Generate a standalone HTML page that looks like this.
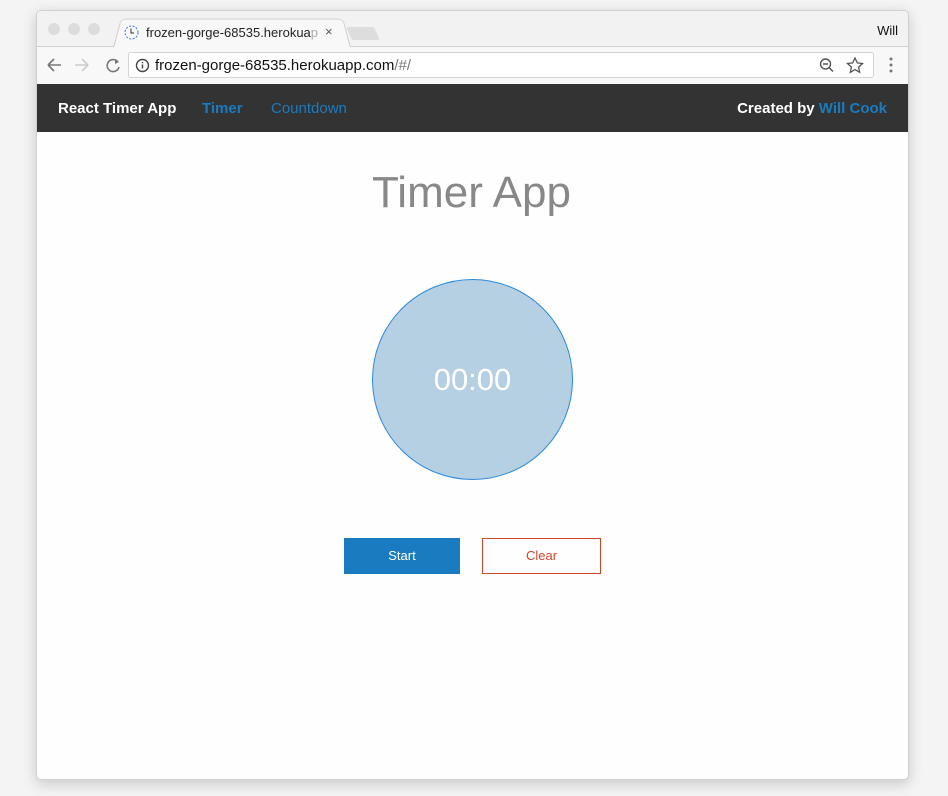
<!DOCTYPE html>
<html><head><style>
*{margin:0;padding:0;box-sizing:border-box}
body{width:948px;height:796px;background:#f4f4f4;font-family:"Liberation Sans",sans-serif;position:relative;overflow:hidden}
.win{position:absolute;left:36px;top:10px;width:873px;height:770px;background:#fefefe;border:1px solid #cfcfcf;border-radius:5px;overflow:hidden;box-shadow:0 4px 14px rgba(0,0,0,.18)}
.tabs{position:absolute;left:0;top:0;width:100%;height:36px;background:#f2f2f2;border-bottom:1px solid #d0d0d0}
.dot{position:absolute;top:12px;width:12px;height:12px;border-radius:50%;background:#dcdcdc}
.tab{position:absolute;left:80px;top:7px;width:230px;height:30px;background:#f8f8f8;border:1px solid #cfcfcf;border-bottom:none;border-radius:5px 5px 0 0;transform:perspective(60px) rotateX(8deg)}
.tabt{position:absolute;left:109px;top:14px;font-size:13px;color:#222}
.tool{position:absolute;left:0;top:36px;width:100%;height:37px;background:#f8f8f8}
.url{position:absolute;left:91px;top:5px;width:746px;height:26px;background:#fff;border:1px solid #d4d4d4;border-radius:3px}
.nav{position:absolute;left:-1px;top:73px;width:873px;height:48px;background:#333}
.nav span{position:absolute;top:16px;font-size:15px}
.circle{position:absolute;left:335px;top:268px;width:201px;height:201px;border-radius:50%;background:#b5cfe3;border:1px solid #2b8ad8;color:#fff;font-size:31px;text-align:center;line-height:199px}
</style></head><body>
<div class="win">
 <div class="tabs">
  <div class="dot" style="left:11px"></div><div class="dot" style="left:31px"></div><div class="dot" style="left:51px"></div>
  <div class="tab"></div>
  <svg style="position:absolute;left:87px;top:14px" width="15" height="15"><circle cx="7.5" cy="7.5" r="6.5" fill="none" stroke="#3a78c8" stroke-dasharray="2 1.5"/><path d="M7 3.5V8h3" stroke="#333" fill="none"/></svg>
  <div class="tabt">frozen-gorge-68535.herokua<span style="color:#aaa">p</span></div>
  <div style="position:absolute;left:288px;top:13px;font-size:13px;color:#555">×</div>
  <div style="position:absolute;left:312px;top:16px;width:28px;height:13px;background:#ddd;transform:skewX(25deg);border-radius:2px"></div>
  <div style="position:absolute;right:10px;top:12px;font-size:13px;color:#111">Will</div>
 </div>
 <div class="tool">
  <svg style="position:absolute;left:9px;top:10px" width="80" height="16"><path d="M2 8h13M2 8l6-6M2 8l6 6" stroke="#777" stroke-width="1.6" fill="none"/><path d="M29 8h13M42 8l-6-6M42 8l-6 6" stroke="#ccc" stroke-width="1.6" fill="none"/><path d="M72 5a6 6 0 1 0 1 5" stroke="#777" stroke-width="1.6" fill="none"/><path d="M69 2l4 3-4 2z" fill="#777"/></svg>
  <div class="url">
   <svg style="position:absolute;left:6px;top:5px" width="15" height="15"><circle cx="7.5" cy="7.5" r="6" fill="none" stroke="#444" stroke-width="1.4"/><path d="M7.5 6.5v4M7.5 4v1.3" stroke="#444" stroke-width="1.5"/></svg>
   <div style="position:absolute;left:26px;top:4px;font-size:15px;color:#111">frozen-gorge-68535.herokuapp.com<span style="color:#777">/#/</span></div>
   <svg style="position:absolute;right:8px;top:4px" width="46" height="17"><circle cx="6.5" cy="7" r="5" fill="none" stroke="#555" stroke-width="1.4"/><path d="M4 7h5M10 10.5l4 4" stroke="#555" stroke-width="1.5"/><path d="M36 1l2.3 4.9 5.2.6-3.9 3.6 1.1 5.2-4.7-2.7-4.7 2.7 1.1-5.2-3.9-3.6 5.2-.6z" fill="none" stroke="#555" stroke-width="1.3"/></svg>
  </div>
  <svg style="position:absolute;left:851px;top:10px" width="6" height="16"><circle cx="3" cy="2" r="1.5" fill="#777"/><circle cx="3" cy="8" r="1.5" fill="#777"/><circle cx="3" cy="14" r="1.5" fill="#777"/></svg>
 </div>
 <div class="nav">
  <span style="left:22px;color:#fff;font-weight:bold">React Timer App</span>
  <span style="left:166px;color:#1a7bc0;font-weight:bold">Timer</span>
  <span style="left:235px;color:#1a7bc0">Countdown</span>
  <span style="right:22px;color:#fff;font-weight:bold">Created by <span style="position:static;color:#1a7bc0">Will Cook</span></span>
 </div>
 <div style="position:absolute;left:-1px;width:100%;top:157px;text-align:center;font-size:44px;color:#888">Timer App</div>
 <div class="circle">00:00</div>
 <div style="position:absolute;left:307px;top:527px;width:116px;height:36px;background:#1a7bc0;color:#fff;font-size:13px;text-align:center;line-height:36px">Start</div>
 <div style="position:absolute;left:445px;top:527px;width:119px;height:36px;border:1px solid #d0442a;color:#d0442a;font-size:13px;text-align:center;line-height:34px">Clear</div>
</div>
</body></html>
